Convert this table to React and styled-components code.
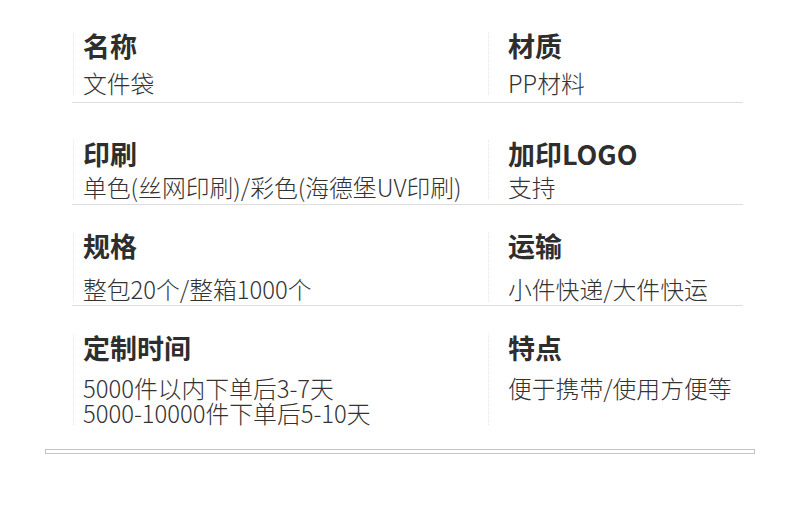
import React from "react";
import styled, { createGlobalStyle } from "styled-components";

const Global = createGlobalStyle`
  html, body { margin: 0; padding: 0; background: #fff; }
  body { font-family: "Noto Sans CJK SC", "Noto Sans", sans-serif; color: #333; }
`;

const Page = styled.div`
  width: 800px;
  height: 505px;
  box-sizing: border-box;
  padding: 0 45px;
  overflow: hidden;
`;

const Table = styled.div`
  margin: 0 12px 0 27px;
  display: flex;
  flex-direction: column;
`;

const Row = styled.div`
  display: grid;
  grid-template-columns: 415px 256px;
  padding-top: ${(p) => p.$pt}px;
  padding-bottom: ${(p) => p.$pb}px;
  border-bottom: ${(p) => (p.$last ? "none" : "1px solid #dddddd")};
`;

const Cell = styled.div`
  display: flex;
  flex-direction: column;
  gap: ${(p) => p.$gap}px;
  margin-left: 1px;
  padding-left: ${(p) => p.$pl}px;
  border-left: 1px dotted #e6e6e6;
`;

const Label = styled.div`
  font-size: 27px;
  font-weight: 700;
  line-height: 28px;
  color: #2e2e2e;
  white-space: nowrap;
`;

const Value = styled.div`
  font-family: "Noto Sans CJK SC Light", "Noto Sans CJK SC DemiLight", "Noto Sans CJK SC", sans-serif;
  font-size: 23.8px;
  font-weight: 300;
  line-height: 25px;
  color: #333;
  white-space: nowrap;
`;

const Footer = styled.div`
  margin-top: 24px;
  height: 3px;
  border: 1px solid #c4c4c4;
  background: #fff;
`;

const rows = [
  { l: ["名称", ["文件袋"]], r: ["材质", ["PP材料"]], pt: 32, gap: 10, pb: 7 },
  {
    l: ["印刷", ["单色(丝网印刷)/彩色(海德堡UV印刷)"]],
    r: ["加印LOGO", ["支持"]],
    pt: 37,
    gap: 6,
    pb: 5,
  },
  {
    l: ["规格", ["整包20个/整箱1000个"]],
    r: ["运输", ["小件快递/大件快运"]],
    pt: 27,
    gap: 16,
    pb: 4,
  },
  {
    l: ["定制时间", ["5000件以内下单后3-7天", "5000-10000件下单后5-10天"]],
    r: ["特点", ["便于携带/使用方便等"]],
    pt: 28,
    gap: 13,
    pb: 0,
    last: true,
  },
];

function Item({ data, gap, pl }) {
  return (
    <Cell $gap={gap} $pl={pl}>
      <Label>{data[0]}</Label>
      <Value>
        {data[1].map((line, i) => (
          <div key={i}>{line}</div>
        ))}
      </Value>
    </Cell>
  );
}

export default function App() {
  return (
    <>
      <Global />
      <Page>
        <Table>
          {rows.map((row, i) => (
            <Row key={i} $pt={row.pt} $pb={row.pb} $last={row.last}>
              <Item data={row.l} gap={row.gap} pl={9} />
              <Item data={row.r} gap={row.gap} pl={19} />
            </Row>
          ))}
        </Table>
        <Footer />
      </Page>
    </>
  );
}
